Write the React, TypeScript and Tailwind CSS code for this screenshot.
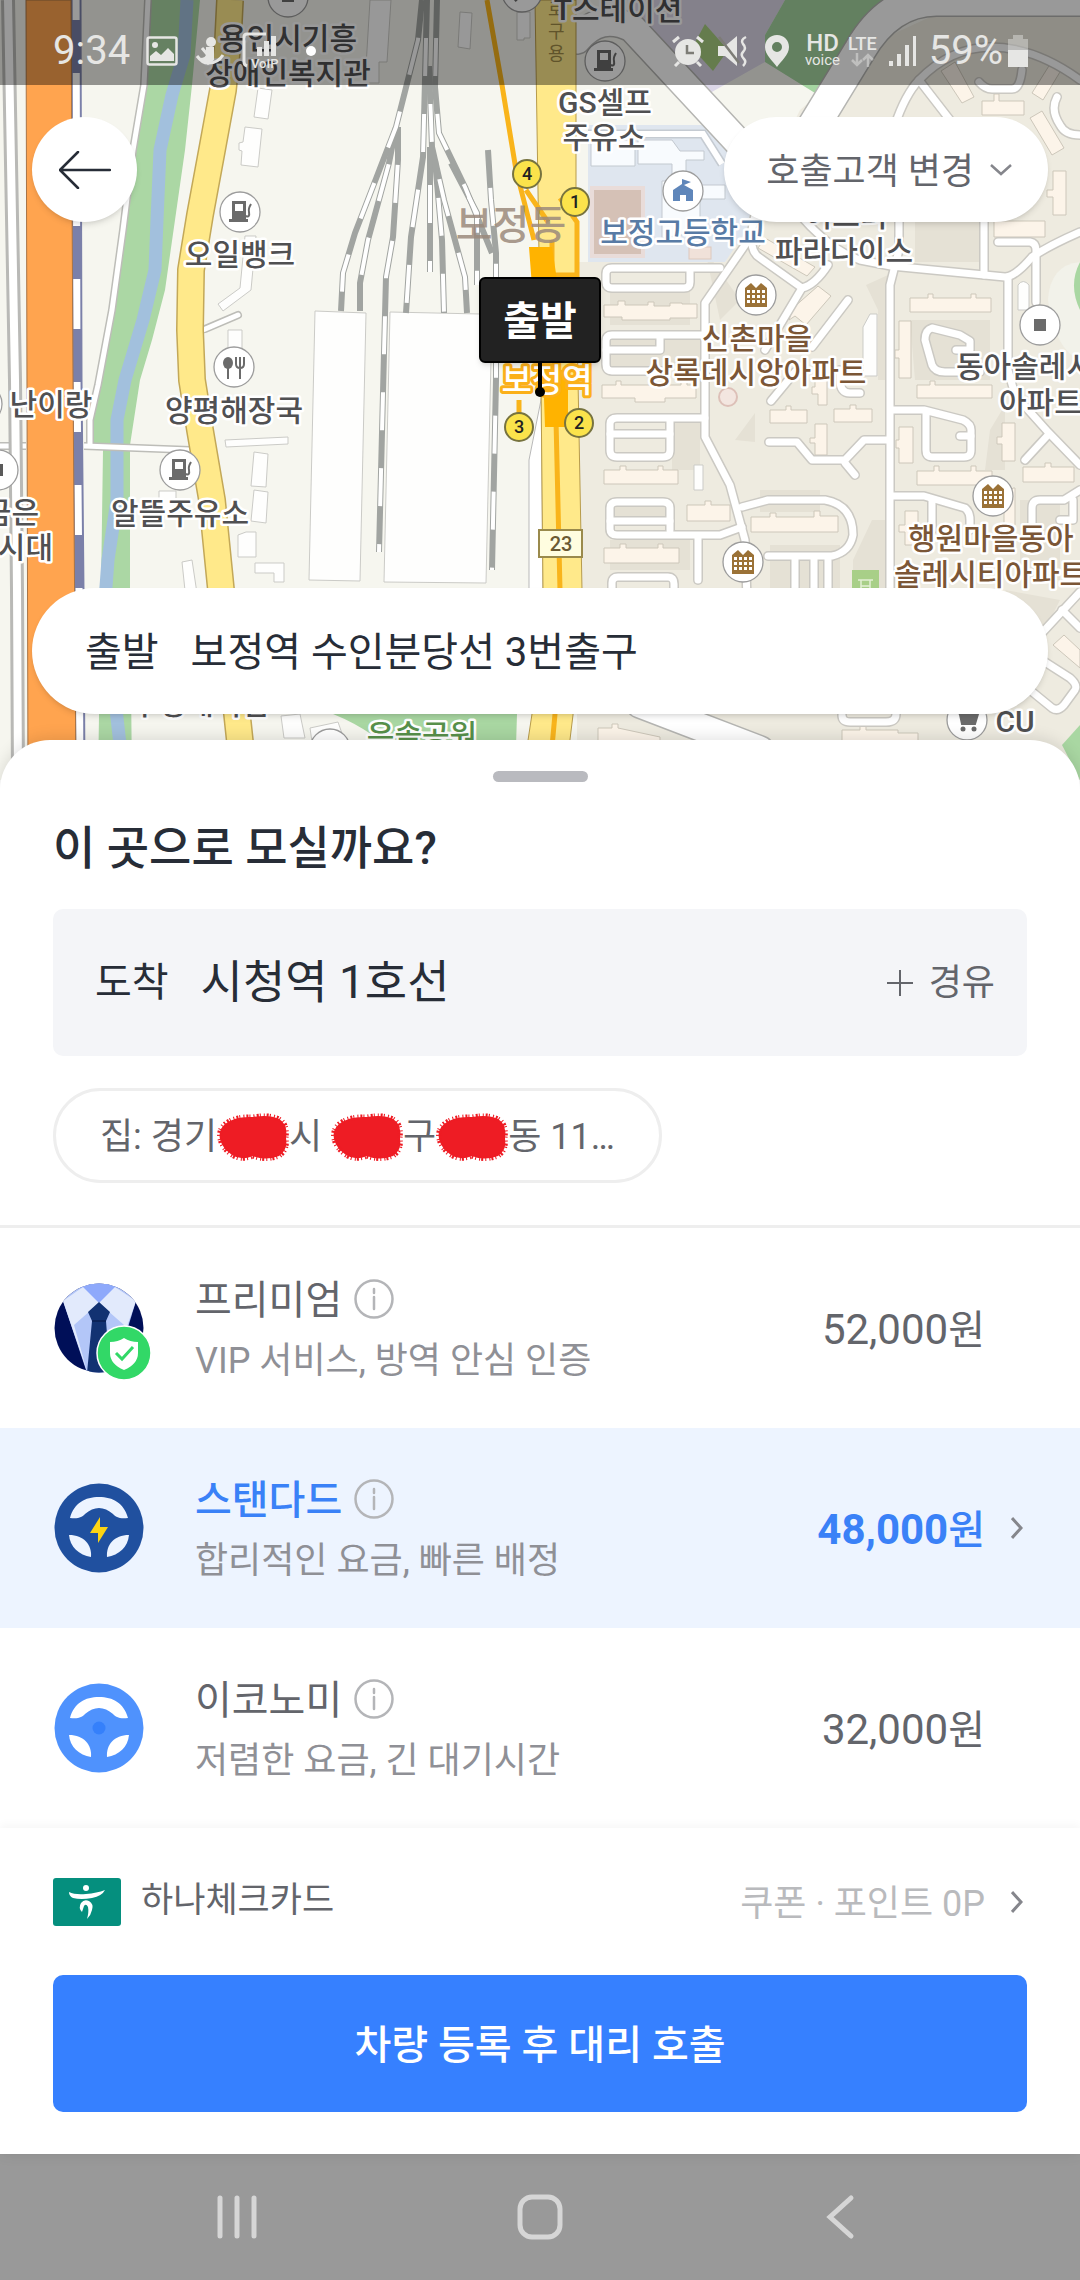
import { ReactNode, useState } from "react";

const ROADS = [
  "M752 235 L705 303 L705 437 L730 485 L745 540 L747 600",
  "M720 268 H612 Q606 268 606 274 V282 Q606 288 612 288 H684 Q690 288 690 282 V270",
  "M705 335 H612 Q606 335 606 341 V364 Q606 371 612 371 H662",
  "M606 350 H660 V337",
  "M705 418 H617 Q610 418 610 424 V450 Q610 457 617 457 H663 Q670 457 670 450 V420",
  "M610 434 H670",
  "M670 530 V508 Q670 502 663 502 H617 Q610 502 610 508 V529 Q610 535 617 535 H720 L742 527",
  "M610 521 H670",
  "M698 537 V580",
  "M612 600 V583 Q612 577 618 577 H668 Q674 577 674 584 V600",
  "M742 507 L768 500 H825 Q853 505 853 535 Q850 552 832 556 H768",
  "M795 557 V600",
  "M814 557 V600",
  "M828 557 V600",
  "M899 215 V250 L890 285 V600",
  "M755 215 Q746 250 760 258 L802 288 L765 350",
  "M802 288 Q815 285 828 265",
  "M848 300 L812 347",
  "M800 215 Q830 250 860 260 L891 266 L1005 277 Q1015 277 1032 257 Q1050 245 1080 232",
  "M984 215 V275",
  "M1008 277 V370 L1015 395 L1048 432 L1080 465",
  "M1048 435 L1025 460",
  "M998 242 H1030 Q1036 243 1036 250 V302",
  "M956 350 H970 V341 L960 335 L932 328 Q925 330 925 340 L932 365 Q935 372 945 372 H980",
  "M891 410 H924 L963 420 Q971 424 971 430 V450 Q971 457 964 457 H932 Q926 457 926 450 V413",
  "M971 436 H960",
  "M891 496 H924 L965 508 Q970 512 970 520 V530",
  "M932 500 V530",
  "M1032 535 V508 Q1032 500 1040 500 H1064 L1080 490",
  "M1073 500 V520 H1060",
  "M769 442 H797 L812 460 H845 L864 440 H888",
  "M845 463 L855 475",
  "M771 401 L795 372",
  "M840 370 V380 Q840 393 850 393 H860",
  "M895 125 Q905 95 919 80 Q950 48 990 47 Q1035 47 1080 80",
  "M919 80 L950 120",
  "M979 82 Q985 89 992 89 H1012 Q1020 89 1022 70",
  "M1057 97 Q1050 110 1060 125 Q1065 135 1080 135",
  "M1080 592 L1040 635",
  "M1062 610 L1080 628",
  "M1030 690 L1052 708 Q1058 712 1064 705 L1075 690 Q1078 685 1070 678 L1045 662",
  "M842 715 Q842 722 850 722 H886 Q896 722 896 714",
];

const TRACKS = [
  "M422 0 L418 40 L396 127 L355 233 L343 273 L341 311",
  "M396 127 L389 163 L368 240 L360 283 L360 311",
  "M398 127 L398 160 L393 237 L386 277 L384 353 L379 552",
  "M427 0 L425 80 L423 157 L411 237 L406 313",
  "M437 0 L435 87 L439 133 L465 187 L492 253",
  "M429 66 L432 147 L444 200 L465 277 L467 313",
  "M430 147 L430 272",
  "M435 160 L442 240 L444 313",
  "M488 150 L491 200 L496 253 L496 380 L492 570",
  "M451 163 L477 213 L477 285",
];

const SHEDS = [
  "M315 311 L366 313 L360 581 L309 580 Z",
  "M390 312 L480 314 H492 L486 583 L384 582 Z",
  "M258 88 L272 90 L268 119 L254 117 Z",
  "M245 127 L262 129 L258 167 L241 165 L242 151 L239 150 V143 L243 142 Z",
  "M245 236 H256 L251 290 L223 311 L218 304 L240 288 Z",
  "M228 330 H242 V350 H228 Z",
  "M225 440 L288 437 V444 L226 447 Z",
  "M254 452 L268 454 L266 487 L251 486 Z",
  "M254 490 L268 492 L266 523 L251 521 Z",
  "M238 535 L246 532 H256 V557 H238 Z",
  "M255 563 H284 V582 H274 V573 H255 Z",
  "M182 562 L192 560 L198 600 H186 Z",
  "M159 491 H176 V510 H159 Z",
  "M460 12 L472 13 L470 49 L458 47 Z",
  "M517 12 H530 V38 H524 V40 H517 Z",
  "M370 0 H391 L387 62 H379 V83 H365 Z",
  "M281 716 L300 714 L305 738 H284 Z",
  "M310 728 L338 722 L345 742 H312 Z",
  "M863 327 L870 314 H877 V376 H863 Z",
  "M1018 285 Q1023 278 1029 285 V310 H1018 Z",
  "M694 465 H703 V490 H694 Z",
];

const BLOCKS = [
  "M604 305 H618 V301 H625 V305 H648 V302 H654 V306 H670 V303 H682 V304 H697 V318 H670 V320 H622 V317 H604 Z",
  "M602 385 H616 V381 H621 V385 H681 V381 H687 V385 H696 V398 H665 V402 H635 V398 H602 Z",
  "M604 470 H620 V466 H626 V470 H658 V466 H663 V470 H678 V484 H604 Z",
  "M604 548 H620 V544 H626 V548 H658 V544 H663 V548 H679 V563 H604 Z",
  "M687 505 H705 V501 H711 V505 H730 V521 H687 Z",
  "M751 517 H770 V513 H776 V517 H814 V511 H820 V516 H838 V532 H751 Z",
  "M770 410 H786 V406 H791 V410 H807 V423 H770 Z",
  "M834 409 H850 V405 H856 V409 H872 V422 H834 Z",
  "M815 424 H827 V455 H815 V443 H810 V438 H815 Z",
  "M815 376 H827 V405 H818 V394 H812 V387 H815 Z",
  "M910 298 H928 V294 H933 V298 H971 V294 H976 V298 H991 V312 H910 Z",
  "M917 385 H930 V381 H935 V385 H992 V398 H917 Z",
  "M899 427 H913 V463 H899 V448 H896 V440 H899 Z",
  "M899 321 H911 V378 H899 V358 H895 V350 H899 Z",
  "M917 471 H934 V466 H939 V471 H971 V466 H976 V471 H992 V485 H917 Z",
  "M905 511 H918 V545 H905 V532 H899 V525 H905 Z",
  "M1002 423 H1015 V461 H1002 V444 H997 V437 H1002 Z",
  "M1023 467 H1045 V463 H1051 V467 H1074 V482 H1023 Z",
  "M1013 488 H1015 V525 H1004 V500 Z",
  "M982 101 H994 V94 H999 V101 H1024 V115 H982 Z",
  "M941 71 L955 62 L974 97 L962 103 Z",
  "M1052 61 L1063 67 L1043 100 L1032 93 Z",
  "M1030 118 L1042 111 L1064 148 L1052 155 Z",
  "M1053 171 H1066 V215 H1053 V197 H1047 V190 H1053 Z",
  "M994 221 H1045 V237 H994 Z",
  "M765 238 L815 267 L807 276 L758 248 Z",
  "M818 286 L831 296 L806 325 L795 316 L789 320 L793 308 Z",
  "M1064 635 L1080 650 V668 L1053 645 Z",
  "M598 728 H612 V724 H618 V728 L660 737 V745 H598 Z",
  "M842 730 H860 V726 H866 V730 H898 V733 H918 V745 H842 Z",
];

function GasIcon() {
  return (
    <g fill="#6b6b6b">
      <path fillRule="evenodd" d="M-8 -11 H6 V7 H8 V10 H-11 V7 H-8 Z M-5 -8 V-1 H3 V-8 Z" />
      <path d="M6 4 Q10 6 9 0 Q8 -3 11 -8" fill="none" stroke="#6b6b6b" strokeWidth="2" />
    </g>
  );
}

function ApartmentIcon() {
  return (
    <g>
      <path d="M-11 12 V-7 L-5 -12 L0 -7 L5 -12 L11 -7 V12 Z" fill="#9b7237" />
      <g fill="#fff">
        {[-8, -3, 2, 7].map((x) =>
          [-5, 0, 5].map((y) => <rect key={`${x}${y}`} x={x - 1} y={y} width="3" height="3" />),
        )}
      </g>
    </g>
  );
}

function Poi({ x, y, children }: { x: number; y: number; children?: ReactNode }) {
  return (
    <g transform={`translate(${x} ${y})`}>
      <circle r="20" fill="#fff" stroke="#9c9c9c" strokeWidth="1.3" />
      {children}
    </g>
  );
}

type LabelProps = { x: number; y: number; color?: string; anchor?: "start" | "middle" | "end"; children: string };

function MapLabel({ x, y, color = "#505052", anchor = "middle", children }: LabelProps) {
  return (
    <text
      x={x}
      y={y}
      textAnchor={anchor}
      fill={color}
      stroke="#fff"
      strokeWidth="5"
      strokeLinejoin="round"
      paintOrder="stroke"
      className="text-[30px] font-medium"
    >
      {children}
    </text>
  );
}

function Exit({ x, y, no }: { x: number; y: number; no: number }) {
  return (
    <g>
      <circle cx={x} cy={y} r="14" fill="#fbe34b" stroke="#77733f" strokeWidth="2" />
      <text x={x} y={y + 6} textAnchor="middle" fill="#222" className="text-[18px] font-medium">
        {no}
      </text>
    </g>
  );
}

function CityMap() {
  return (
    <svg
      className="absolute inset-0 h-full w-full"
      viewBox="0 0 1080 780"
      preserveAspectRatio="xMidYMid slice"
      role="img"
      aria-label="보정역 주변 지도"
    >
      <rect width="1080" height="780" fill="#f6f6ef" />
      <path d="M577 262 H725 L745 222 L800 110 L880 40 L930 17 H1080 V780 H577 Z" fill="#eeebe0" />
      <g fill="#e5e1d5">
        <path d="M610 290 H690 V325 H610 Z M610 340 H700 V366 H610 Z M672 418 H700 V470 H672 Z M760 490 H820 V512 H760 Z" />
        <path d="M735 440 L755 413 V442 Z M853 590 V560 L872 520 H888 V590 Z M866 285 L888 275 V380 H878 V310 Z" />
        <path d="M915 200 H980 V262 H915 Z M932 330 H960 V365 H932 Z M990 430 L1005 405 V470 H985 Z M1020 500 H1060 V580 H1020 Z" />
        <path d="M910 320 H990 V380 H915 Z M615 506 H665 V518 H615 Z M610 540 H690 V570 H610 Z M770 545 H840 V590 H770 Z" />
        <path d="M1005 590 L1060 600 L1040 640 Z M705 250 L740 300 L720 320 Z" />
      </g>
      <path d="M1080 262 Q1050 265 1048 300 Q1055 350 1080 360 Z" fill="#f2f2ea" />
      <path d="M1080 262 Q1068 285 1080 310 Z" fill="#a9d7a2" />

      {/* parks and campus */}
      <path d="M630 0 H785 L765 35 V62 L710 93 L640 30 Z" fill="#dcd7e8" />
      <path d="M785 0 H905 L850 45 L815 93 L765 62 V35 Z" fill="#a5d5a1" />
      <path d="M705 24 L728 50 L713 71 L692 48 Z" fill="#a9cf80" />
      <path d="M588 125 H705 L735 160 H790 V215 L752 222 L725 262 H588 Z" fill="#dfe6ef" />
      <path d="M588 134 H703 L722 164" fill="none" stroke="#c5cbd2" strokeWidth="9" />
      <path d="M588 134 H703 L722 164" fill="none" stroke="#fff" strokeWidth="6" />
      <g fill="#f8fbfe" stroke="#c3c9d0">
        <path d="M591 140 H635 V166 H591 Z" />
        <path d="M638 140 H672 L680 151 H704 V160 H686 V185 H725 V199 H700 V232 L662 238 V181 H672 V164 H638 Z" />
      </g>
      <rect x="592" y="188" width="51" height="68" fill="#d5c1b6" stroke="#e9dcd9" strokeWidth="4" />
      <rect x="689" y="247" width="22" height="12" fill="#f0e1d9" stroke="#ddc8bd" />
      <path d="M333 714 H517 L515 780 H420 Q385 735 333 714 Z" fill="#a9d7a2" />
      <path d="M1080 725 L1062 745 L1080 780 Z" fill="#a9d7a2" />
      <rect x="852" y="570" width="27" height="40" fill="#a8cf88" />
      <path d="M858 580 H873 M861 580 V592 M870 580 V592 M861 586 H870" stroke="#e2f0d4" strokeWidth="1.5" fill="none" />
      <circle cx="728" cy="397" r="9" fill="#f3e6e0" stroke="#ddc0b8" strokeWidth="2" />

      {/* river, side streets and the west highway */}
      <path
        d="M150 0 L146 85 L133 160 L125 240 L110 310 L101 380 L94 415 L93 445 L103 450 L101 588 L98 780 H132 L130 590 L130 445 L140 380 L152 340 L165 290 L175 220 L185 150 L192 85 L200 0 Z"
        fill="#abd7a4"
      />
      <path
        d="M187 0 L184 55 L172 95 L160 150 L157 220 L155 270 L143 320 L125 380 L117 420 L117 500 L108 560 L105 600 L115 700 L124 780"
        fill="none"
        stroke="#a2c0dd"
        strokeWidth="13"
        strokeLinejoin="round"
      />
      <g fill="none" strokeLinejoin="round">
        <path d="M148 0 L144 85 L133 150 L123 230 L112 310 L98 385 L90 420 V446" stroke="#bdbdb8" strokeWidth="8" />
        <path d="M84 446 L190 450 M0 446 H26" stroke="#bdbdb8" strokeWidth="8" />
        <path d="M148 0 L144 85 L133 150 L123 230 L112 310 L98 385 L90 420 V446" stroke="#fff" strokeWidth="5" />
        <path d="M84 446 L190 450 M0 446 H26" stroke="#fff" strokeWidth="5" />
        <path d="M205 329 L238 315" stroke="#bdbdb8" strokeWidth="8" strokeLinecap="round" />
        <path d="M203 330 L238 315" stroke="#fff" strokeWidth="5" strokeLinecap="round" />
        <path d="M8 0 L15 380 L17 590 L18 780" stroke="#b9b9b6" strokeWidth="14" />
        <path d="M8 0 L15 380 L17 590 L18 780" stroke="#fff" strokeWidth="8" />
        <path
          d="M230 0 L228 40 L223 90 L212 150 L200 215 L191 270 L190 330 L192 380 L200 430 L212 500 L221 590 L237 714 L244 780"
          stroke="#c3a858"
          strokeWidth="28"
        />
        <path
          d="M230 0 L228 40 L223 90 L212 150 L200 215 L191 270 L190 330 L192 380 L200 430 L212 500 L221 590 L237 714 L244 780"
          stroke="#ffe98a"
          strokeWidth="25"
        />
        <path d="M76 0 L77 380 L79 590 L80 780" stroke="#7b80a9" strokeWidth="11" />
        <path d="M76 -30 L77 380 L79 590 L80 780" stroke="#fff" strokeWidth="7" strokeDasharray="50 53" />
      </g>
      <path d="M26 0 H71 L73 380 L76 780 H28 Z" fill="#ffa44f" stroke="#a87446" />

      <g fill="#fefefd" stroke="#cbcbc7">
        {SHEDS.map((d) => (
          <path key={d} d={d} />
        ))}
      </g>
      <g fill="#fcf4e9" stroke="#cdc7ba">
        {BLOCKS.map((d) => (
          <path key={d} d={d} />
        ))}
      </g>

      <g fill="none" strokeLinejoin="round">
        {TRACKS.map((d) => (
          <path key={d} d={d} stroke="#a1a4a1" strokeWidth="6" />
        ))}
        {TRACKS.map((d) => (
          <path key={d} d={d} stroke="#fff" strokeWidth="4" strokeDasharray="38 38" strokeDashoffset="38" />
        ))}
      </g>

      <g fill="none" strokeLinecap="round" strokeLinejoin="round">
        {ROADS.map((d) => (
          <path key={d} d={d} stroke="#cbc9c3" strokeWidth="10" />
        ))}
        {ROADS.map((d) => (
          <path key={d} d={d} stroke="#fff" strokeWidth="7" />
        ))}
        <path d="M577 40 Q600 12 632 28 L750 155" stroke="#b5b5b2" strokeWidth="30" />
        <path d="M577 40 Q600 12 632 28 L750 155" stroke="#fff" strokeWidth="27" />
        <path d="M805 140 L860 50 Q890 -2 940 0 H1090" stroke="#b5b5b2" strokeWidth="34" />
        <path d="M805 140 L860 50 Q890 -2 940 0 H1090" stroke="#fff" strokeWidth="31" />
        <path d="M640 704 L760 750" stroke="#b5b5b2" strokeWidth="30" />
        <path d="M640 704 L760 750" stroke="#fff" strokeWidth="27" />
      </g>

      {/* route 23 with the metro line on top */}
      <path d="M529 600 V460 L545 380 H541 L543 600 Z" fill="#fff" stroke="#b9b9b9" />
      <path d="M535 0 H576 V275 L578 380 L582 590 L573 715 L565 780 H522 L532 714 L543 590 L541 380 Z" fill="#ffe98a" stroke="#b79b4c" />
      <g fill="none" stroke="#f9b41b" strokeWidth="5">
        <path d="M487 0 L502 85 L516 170 L534 240" />
        <path d="M526 190 L548 222 M560 198 L577 222 V275 H552 V240" />
        <path d="M556 420 L560 590 L555 714 L549 780" />
        <path d="M519 400 V415" />
      </g>
      <path d="M529 247 H552 L560 300 H533 Z M543 370 H568 V427 H545 Z" fill="#ffb300" />
      <rect x="539" y="530" width="43" height="27" fill="#fffde0" stroke="#9a8a4c" strokeWidth="2" />
      <text x="561" y="551" textAnchor="middle" fill="#6b5a33" className="text-[20px] font-medium">
        23
      </text>
      <g fill="#a08c48" className="text-[18px]">
        <text x="548" y="16">로</text>
        <text x="548" y="38">구</text>
        <text x="548" y="60">용</text>
      </g>

      <Poi x={288} y={-3}>
        <rect x="-6" y="-4" width="12" height="9" fill="#6b6b6b" />
      </Poi>
      <Poi x={522} y={-8}>
        <path d="M-8 8 L6 -4" stroke="#6b6b6b" strokeWidth="5" />
      </Poi>
      <Poi x={605} y={61}>
        <GasIcon />
      </Poi>
      <Poi x={240} y={212}>
        <GasIcon />
      </Poi>
      <Poi x={180} y={470}>
        <GasIcon />
      </Poi>
      <Poi x={234} y={367}>
        <g fill="#6b6b6b">
          <ellipse cx="-6" cy="-4" rx="5" ry="6" />
          <path d="M-7 0 H-5 V12 H-7 Z" />
          <path d="M2 -10 V-3 Q2 1 6 1 Q10 1 10 -3 V-10 M6 -10 V12" fill="none" stroke="#6b6b6b" strokeWidth="2" />
        </g>
      </Poi>
      <Poi x={-18} y={404} />
      <Poi x={-2} y={470}>
        <rect x="-4" y="-6" width="9" height="12" fill="#5a5a5a" />
      </Poi>
      <Poi x={683} y={191}>
        <path d="M-10 10 V-1 L-1 -7 V-12 L8 -9 L1 -6 L10 -1 V10 H3 V4 H-3 V10 Z" fill="#5f86ba" />
      </Poi>
      <Poi x={756} y={295}>
        <ApartmentIcon />
      </Poi>
      <Poi x={743} y={562}>
        <ApartmentIcon />
      </Poi>
      <Poi x={993} y={496}>
        <ApartmentIcon />
      </Poi>
      <Poi x={1040} y={325}>
        <rect x="-6" y="-6" width="12" height="12" fill="#6b6b6b" />
      </Poi>
      <Poi x={967} y={720}>
        <path d="M-13 -10 H-8 L-5 4 H8 L11 -6 H-7 Z" fill="#6b6b6b" stroke="#6b6b6b" strokeWidth="2" />
        <circle cx="-4" cy="9" r="2.5" fill="#6b6b6b" />
        <circle cx="7" cy="9" r="2.5" fill="#6b6b6b" />
      </Poi>
      <Poi x={330} y={749} />

      <MapLabel x={288} y={49}>용인시기흥</MapLabel>
      <MapLabel x={288} y={84}>장애인복지관</MapLabel>
      <MapLabel x={618} y={20}>T스테이션</MapLabel>
      <MapLabel x={605} y={113}>GS셀프</MapLabel>
      <MapLabel x={604} y={148}>주유소</MapLabel>
      <MapLabel x={240} y={265}>오일뱅크</MapLabel>
      <MapLabel x={234} y={421}>양평해장국</MapLabel>
      <MapLabel x={180} y={524}>알뜰주유소</MapLabel>
      <MapLabel x={51} y={415}>난이랑</MapLabel>
      <MapLabel x={39} y={523} anchor="end">금은</MapLabel>
      <MapLabel x={53} y={558} anchor="end">시대</MapLabel>
      <MapLabel x={683} y={243} color="#587ba5">보정고등학교</MapLabel>
      <MapLabel x={846} y={226}>어스더</MapLabel>
      <MapLabel x={844} y={262}>파라다이스</MapLabel>
      <MapLabel x={757} y={349} color="#7b5636">신촌마을</MapLabel>
      <MapLabel x={756} y={383} color="#7b5636">상록데시앙아파트</MapLabel>
      <MapLabel x={956} y={377} anchor="start">동아솔레시</MapLabel>
      <MapLabel x={999} y={413} anchor="start">아파트</MapLabel>
      <MapLabel x={908} y={549} anchor="start" color="#7b5636">행원마을동아</MapLabel>
      <MapLabel x={894} y={585} anchor="start" color="#7b5636">솔레시티아파트</MapLabel>
      <MapLabel x={1015} y={732}>CU</MapLabel>
      <MapLabel x={200} y={714}>수정대리점</MapLabel>
      <MapLabel x={422} y={746} color="#57904a">은솔공원</MapLabel>
      <text x="511" y="239" textAnchor="middle" fill="#9b897c" fillOpacity="0.85" className="text-[40px] font-medium">
        보정동
      </text>
      <text
        x="547"
        y="392"
        textAnchor="middle"
        fill="#fff"
        stroke="#fbb01a"
        strokeWidth="6"
        strokeLinejoin="round"
        paintOrder="stroke"
        className="text-[33px] font-medium"
      >
        보정역
      </text>
      <Exit x={527} y={174} no={4} />
      <Exit x={575} y={202} no={1} />
      <Exit x={579} y={423} no={2} />
      <Exit x={519} y={427} no={3} />
    </svg>
  );
}

function StatusBar() {
  return (
    <header className="relative flex h-[85px] items-center justify-between bg-black/40 pt-4 pr-[51px] pl-[53px] text-[#e6e6e4]">
      <div className="flex items-center gap-4">
        <span className="text-[40px] leading-none">9:34</span>
        <svg width="32" height="30" viewBox="0 0 32 30" fill="none">
          <rect x="1.5" y="1.5" width="29" height="27" rx="2" stroke="currentColor" strokeWidth="2.5" />
          <circle cx="9" cy="9" r="3" fill="currentColor" />
          <path d="M4 25 V20 L10 15 L15 19 L22 12 L28 18 V25 Z" fill="currentColor" />
        </svg>
        <svg width="32" height="30" viewBox="0 0 32 30" fill="none">
          <circle cx="17" cy="6" r="5" fill="currentColor" />
          <path d="M12 11 H20 V24 L14 29 L6 22 Q12 22 12 18 Z" fill="currentColor" />
          <path d="M8 12 L13 18 M3 20 Q9 28 15 27 Q24 27 29 19" stroke="currentColor" strokeWidth="3" />
        </svg>
        <svg width="40" height="38" viewBox="0 0 40 38" fill="none">
          <path d="M24 2 H5 Q2 2 2 5 V30 Q2 33 5 34" stroke="currentColor" strokeWidth="3" />
          <path d="M15 15 H20 V24 H15 Z M22 9 H27 V24 H22 Z M29 4 H34 V24 H29 Z" fill="currentColor" />
          <text x="9" y="36" fill="currentColor" className="text-[13px] font-medium">
            VoIP
          </text>
        </svg>
        <span className="ml-2 h-[10px] w-[10px] rounded-full bg-white" />
      </div>
      <div className="flex items-center gap-3">
        <svg width="34" height="32" viewBox="0 0 34 32" fill="none">
          <circle cx="17" cy="17" r="13" fill="currentColor" />
          <path d="M16 10 V18 H23" stroke="#7d7c76" strokeWidth="2.5" />
          <path d="M2 7 L8 2 M26 2 L32 7 M8 27 L4 31 M26 27 L30 31" stroke="currentColor" strokeWidth="3" />
        </svg>
        <svg width="32" height="32" viewBox="0 0 32 32" fill="none">
          <path d="M1 11 H8 L20 1 V31 L8 21 H1 Z" fill="currentColor" />
          <path d="M2 2 L22 28" stroke="#7d7c76" strokeWidth="2.5" />
          <path d="M29 2 Q23 5 26 9 Q30 13 26 17 Q23 20 27 24 Q30 27 26 31" stroke="currentColor" strokeWidth="2.5" />
        </svg>
        <svg width="32" height="32" viewBox="0 0 32 32">
          <path
            fillRule="evenodd"
            d="M16 0 C9 0 4 5 4 12 C4 20 12 26 16 32 C20 26 28 20 28 12 C28 5 23 0 16 0 Z M16 7 A5 5 0 1 1 16 17 A5 5 0 1 1 16 7 Z"
            fill="currentColor"
          />
        </svg>
        <span className="flex flex-col items-center">
          <span className="text-[24px] leading-[18px] font-medium">HD</span>
          <span className="text-[15px] leading-[16px]">voice</span>
        </span>
        <span className="-ml-1 flex flex-col items-center">
          <span className="text-[18px] leading-[18px] font-medium">LTE</span>
          <svg width="24" height="14" viewBox="0 0 24 14" fill="none" stroke="currentColor" strokeWidth="2.5" opacity="0.5">
            <path d="M7 0 V12 M2 7 L7 12 L12 7 M18 14 V2 M13 7 L18 2 L23 7" />
          </svg>
        </span>
        <svg width="28" height="30" viewBox="0 0 28 30" fill="currentColor">
          <path d="M0 25 H4 V30 H0 Z M8 18 H12 V30 H8 Z M16 9 H20 V30 H16 Z M24 0 H27 V30 H24 Z" />
        </svg>
        <span className="text-[40px] leading-none">59%</span>
        <svg className="-ml-2" width="22" height="32" viewBox="0 0 22 32" fill="currentColor">
          <path d="M6 0 H16 V4 H21 V32 H1 V4 H6 Z" opacity="0.45" />
          <path d="M1 15 H21 V32 H1 Z" />
        </svg>
      </div>
    </header>
  );
}

function PickupPin() {
  return (
    <div className="absolute top-[277px] left-1/2 flex -translate-x-1/2 flex-col items-center">
      <span className="flex h-[86px] w-[122px] items-center justify-center rounded-md border-2 border-black bg-[#222] pt-1 text-[40px] leading-none font-bold text-white shadow-md">
        출발
      </span>
      <span className="h-7 w-1 bg-black" />
      <span className="-mt-1 h-[10px] w-[10px] rounded-full bg-black" />
    </div>
  );
}

function PremiumIcon() {
  return (
    <svg width="98" height="106" viewBox="0 -8 98 106">
      <clipPath id="suit">
        <circle cx="45" cy="45" r="44.5" />
      </clipPath>
      <g clipPath="url(#suit)">
        <rect width="90" height="90" fill="#000f58" />
        <path d="M20 0 H70 L82 18 L60 90 H33 L9 18 Z" fill="#b3c6f8" />
        <path d="M20 0 H70 L45 20 Z" fill="#8ea9fb" />
        <path d="M29 4 L45 20 L20 42 L33 88 L9 18 Z" fill="#e2eafc" />
        <path d="M61 4 L45 20 L70 42 L60 80 L82 18 Z" fill="#e2eafc" />
        <path d="M45 19 L56 29 L52 38 L56 90 H33 L38 38 L34 29 Z" fill="#123272" />
        <path d="M38 38 H52" stroke="#0b2359" strokeWidth="2" />
      </g>
      <circle cx="70" cy="70" r="27" fill="#32d867" stroke="#fff" strokeWidth="1.5" />
      <path d="M70 55 Q76 59 84 59 V70 Q84 81 70 87 Q56 81 56 70 V59 Q64 59 70 55 Z" fill="#fff" />
      <path d="M62 70 L68 76 L79 64" fill="none" stroke="#32d867" strokeWidth="3" />
    </svg>
  );
}

function WheelIcon({ color, hole, children }: { color: string; hole: string; children: ReactNode }) {
  return (
    <svg width="98" height="98" viewBox="0 0 98 98">
      <circle cx="45" cy="49" r="44.5" fill={color} />
      <g fill={hole}>
        <path d="M16 39 C20 24 31 18 45 18 C59 18 70 24 74 39 C65 40 62 38 59 35 C50 27 40 27 31 35 C28 38 25 40 16 39 Z" />
        <path d="M15 56 C30 56 38 66 37 78 C25 76 16 68 15 56 Z" />
        <path d="M75 56 C60 56 52 66 53 78 C65 76 74 68 75 56 Z" />
      </g>
      {children}
    </svg>
  );
}

function InfoIcon() {
  return (
    <svg width="40" height="40" viewBox="0 0 40 40" fill="none" stroke="#b4b5b8" strokeWidth="2.5">
      <circle cx="20" cy="20" r="18.5" />
      <path d="M20 10 V14 M20 18 V30" strokeLinecap="round" />
    </svg>
  );
}

function ChevronRight() {
  return (
    <svg width="12" height="22" viewBox="0 0 12 22" fill="none" stroke="#85868c" strokeWidth="3">
      <path d="M1 1 L10 11 L1 21" />
    </svg>
  );
}

function Scribble() {
  return (
    <svg className="shrink-0" width="72" height="50" viewBox="0 0 72 50">
      <path
        d="M8 12 Q18 4 36 5 Q52 2 62 7 Q71 12 69 26 Q71 38 62 44 Q48 49 36 44 Q24 49 15 43 Q5 36 3 27 Q1 18 8 12 Z"
        fill="#ee1c24"
      />
      <path
        d="M8 12 Q18 4 36 5 Q52 2 62 7 Q71 12 69 26 Q71 38 62 44 Q48 49 36 44 Q24 49 15 43 Q5 36 3 27 Q1 18 8 12 Z"
        fill="none"
        stroke="#ee1c24"
        strokeWidth="5"
        strokeDasharray="1 2 2 1 1 3"
      />
    </svg>
  );
}

const SERVICES = [
  { id: "premium", name: "프리미엄", desc: "VIP 서비스, 방역 안심 인증", price: "52,000", icon: <PremiumIcon /> },
  {
    id: "standard",
    name: "스탠다드",
    desc: "합리적인 요금, 빠른 배정",
    price: "48,000",
    icon: (
      <WheelIcon color="#20509f" hole="#edf4ff">
        <path d="M46 38 L36 54 H44 V64 L54 48 H46 Z" fill="#fdd412" />
      </WheelIcon>
    ),
  },
  {
    id: "economy",
    name: "이코노미",
    desc: "저렴한 요금, 긴 대기시간",
    price: "32,000",
    icon: (
      <WheelIcon color="#4f92fd" hole="#fff">
        <circle cx="45" cy="49" r="6.5" fill="#3580fb" />
      </WheelIcon>
    ),
  },
];

function ServiceList() {
  const [selected, setSelected] = useState("standard");

  return (
    <div role="radiogroup" aria-label="서비스 선택" className="border-t-[3px] border-[#eee]">
      {SERVICES.map(({ id, name, desc, price, icon }) => {
        const active = id === selected;
        return (
          <label
            key={id}
            className={`relative flex h-[200px] items-center pr-[57px] pl-[54px] ${active ? "bg-[#edf4ff]" : "bg-white"}`}
          >
            <input
              type="radio"
              name="service"
              value={id}
              checked={active}
              onChange={() => setSelected(id)}
              className="sr-only"
            />
            {icon}
            <span className="ml-[43px] flex flex-1 flex-col gap-1 pt-1.5">
              <span className="flex items-center gap-3">
                <span
                  className={`text-[40px] leading-[56px] ${active ? "font-medium text-[#3a81f7]" : "text-[#63656b]"}`}
                >
                  {name}
                </span>
                <button type="button" aria-label={`${name} 안내`} className="pb-1">
                  <InfoIcon />
                </button>
              </span>
              <span className="text-[36px] leading-[56px] text-[#8f9096]">{desc}</span>
            </span>
            <span className={`pt-1 text-[42px] leading-[56px] ${active ? "font-bold text-[#3a81f7]" : "text-[#63656b]"}`}>
              {price}
              <span className={active ? "text-[40px] font-medium" : "text-[40px]"}>원</span>
            </span>
            <span className="ml-[26px] w-3">{active && <ChevronRight />}</span>
          </label>
        );
      })}
    </div>
  );
}

function Payment() {
  return (
    <div className="relative px-[53px] pb-[42px] shadow-[0_-4px_8px_rgba(0,0,0,0.03)]">
      <div className="flex h-[147px] items-center justify-between text-[36px]">
        <button type="button" className="flex items-center gap-5 text-[35px] text-[#63656b]">
          <svg width="68" height="48" viewBox="0 0 68 48">
            <rect width="68" height="48" rx="3" fill="#058f7e" />
            <circle cx="33" cy="10" r="3" fill="#fff" />
            <path d="M16 14 Q22 17 33 16 Q44 15 52 12 Q49 18 39 20 Q28 22 20 20 Q16 18 16 14 Z" fill="#fff" />
            <path d="M29 34 Q25 30 28 25 Q31 21 36 23 Q41 26 39 32 Q38 37 34 41 Q36 34 35 29 Q33 25 31 28 Q30 31 29 34 Z" fill="#fff" />
          </svg>
          하나체크카드
        </button>
        <button type="button" className="flex items-center gap-[26px] pr-1 text-[#b9babd]">
          <span className="pt-1">쿠폰 · 포인트 0P</span>
          <ChevronRight />
        </button>
      </div>
      <button
        type="button"
        className="h-[137px] w-full rounded-[10px] bg-[#3680ff] pt-1 text-[40px] leading-none font-medium text-white"
      >
        차량 등록 후 대리 호출
      </button>
    </div>
  );
}

function NavigationBar() {
  return (
    <nav className="flex h-[126px] items-center justify-around bg-[#999] px-[86px]">
      <button type="button" aria-label="최근 앱">
        <svg width="44" height="48" viewBox="0 0 44 48" stroke="#d6d6d6" strokeWidth="5" strokeLinecap="round">
          <path d="M5 5 V43 M22 5 V43 M39 5 V43" />
        </svg>
      </button>
      <button type="button" aria-label="홈">
        <svg width="48" height="48" viewBox="0 0 48 48" fill="none" stroke="#d6d6d6" strokeWidth="5">
          <rect x="4" y="4" width="40" height="40" rx="12" />
        </svg>
      </button>
      <button type="button" aria-label="뒤로">
        <svg width="44" height="48" viewBox="0 0 44 48" fill="none" stroke="#d6d6d6" strokeWidth="5" strokeLinecap="round">
          <path d="M30 5 L9 24 L30 43" />
        </svg>
      </button>
    </nav>
  );
}

export default function App() {
  const [destination, setDestination] = useState("시청역 1호선");

  return (
    <div className="flex min-h-screen flex-col bg-white font-['Roboto','Noto_Sans_CJK_KR',sans-serif] text-[#272d37]">
      <section className="relative flex h-[780px] flex-col overflow-hidden">
        <CityMap />
        <StatusBar />
        <PickupPin />
        <div className="relative mt-8 flex justify-between px-8">
          <button
            type="button"
            aria-label="뒤로 가기"
            className="flex h-[105px] w-[105px] items-center justify-center rounded-full bg-white shadow-md"
          >
            <svg width="52" height="38" viewBox="0 0 52 38" fill="none" stroke="#272d37" strokeWidth="2.5">
              <path d="M51 19 H1 M19 1 L1 19 L19 37" strokeLinecap="round" strokeLinejoin="round" />
            </svg>
          </button>
          <button
            type="button"
            className="flex h-[105px] items-center gap-4 rounded-full bg-white pr-9 pl-[42px] text-[36px] text-[#63656b] shadow-md"
          >
            <span className="pt-1">호출고객 변경</span>
            <svg width="22" height="12" viewBox="0 0 22 12" fill="none" stroke="#85868c" strokeWidth="2.5">
              <path d="M1 1 L11 10 L21 1" />
            </svg>
          </button>
        </div>
        <div className="relative mt-auto px-8 pb-[66px]">
          <button
            type="button"
            className="flex h-[126px] w-full items-center gap-8 rounded-full bg-white px-[53px] pt-1 text-[40px] shadow-md"
          >
            <span>출발</span>
            <span>보정역 수인분당선 3번출구</span>
          </button>
        </div>
      </section>

      <main className="relative -mt-10 flex flex-1 flex-col rounded-t-[50px] bg-white pt-[31px] shadow-[0_-2px_16px_rgba(0,0,0,0.12)]">
        <span className="mx-auto h-[11px] w-[95px] rounded-full bg-[#b9babf]" />
        <div className="px-[53px] pt-[38px] pb-[42px]">
          <h1 className="text-[46px] leading-[56px] font-medium">이 곳으로 모실까요?</h1>
          <div className="mt-[33px] flex h-[147px] items-center rounded-[10px] bg-[#f4f5f8] pr-8 pl-[42px]">
            <label htmlFor="destination" className="text-[40px]">
              도착
            </label>
            <input
              id="destination"
              value={destination}
              onChange={(e) => setDestination(e.target.value)}
              className="ml-8 min-w-0 flex-1 bg-transparent text-[46px] outline-none"
            />
            <button type="button" className="flex items-center gap-4 text-[36px] text-[#63656b]">
              <svg width="26" height="26" viewBox="0 0 26 26" stroke="#63656b" strokeWidth="2">
                <path d="M13 0 V26 M0 13 H26" />
              </svg>
              경유
            </button>
          </div>
          <button
            type="button"
            className="mt-8 flex h-[95px] items-center rounded-full border-[3px] border-[#eee] pt-0.5 pr-11 pl-11 text-[36px] whitespace-pre text-[#63656b]"
          >
            집: 경기
            <Scribble />
            <span>시 </span>
            <Scribble />
            구
            <Scribble />
            동 11…
          </button>
        </div>
        <ServiceList />
        <Payment />
      </main>
      <NavigationBar />
    </div>
  );
}
